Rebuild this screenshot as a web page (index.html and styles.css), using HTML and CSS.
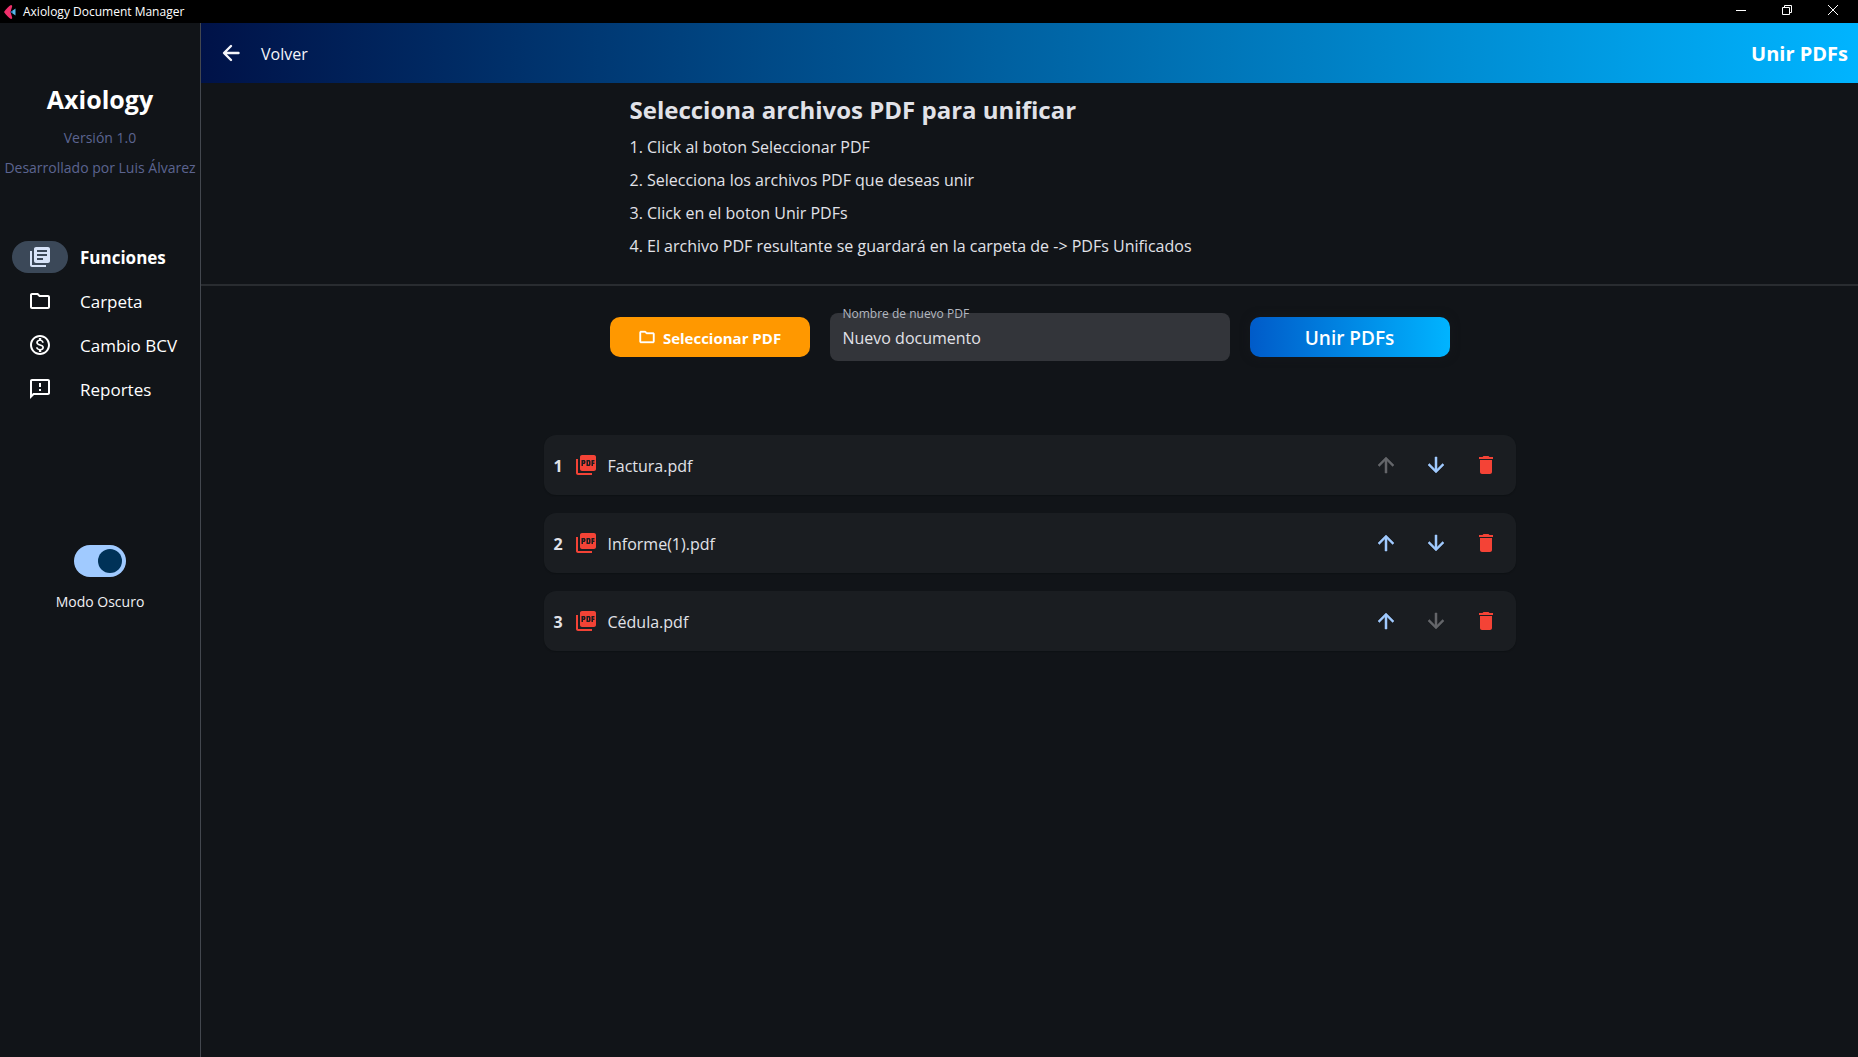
FILE: index.html
```html
<!DOCTYPE html>
<html lang="es">
<head>
<meta charset="utf-8">
<title>Axiology Document Manager</title>
<link rel="stylesheet" href="styles.css">
</head>
<body>
<svg class="sprite" aria-hidden="true">
  <symbol id="books" viewBox="0 0 24 24"><path d="M4 6H2v14c0 1.1.9 2 2 2h14v-2H4V6zm16-4H8c-1.1 0-2 .9-2 2v12c0 1.1.9 2 2 2h12c1.1 0 2-.9 2-2V4c0-1.1-.9-2-2-2zm-1 9H9V9h10v2zm-4 4H9v-2h6v2zm4-8H9V5h10v2z"/></symbol>
  <symbol id="folder" viewBox="0 0 24 24"><path d="M9.17 6l2 2H20v10H4V6h5.17M10 4H4c-1.1 0-1.99.9-1.99 2L2 18c0 1.1.9 2 2 2h16c1.1 0 2-.9 2-2V8c0-1.1-.9-2-2-2h-8l-2-2z"/></symbol>
  <symbol id="money" viewBox="0 0 24 24"><path d="M12 2C6.48 2 2 6.48 2 12s4.48 10 10 10 10-4.48 10-10S17.52 2 12 2zm0 18c-4.41 0-8-3.59-8-8s3.59-8 8-8 8 3.59 8 8-3.59 8-8 8zm.31-8.86c-1.77-.45-2.34-.94-2.34-1.67 0-.84.79-1.43 2.1-1.43 1.38 0 1.9.66 1.94 1.64h1.71c-.05-1.34-.87-2.57-2.49-2.97V5H10.9v1.69c-1.51.32-2.72 1.3-2.72 2.81 0 1.79 1.49 2.69 3.66 3.21 1.95.46 2.34 1.15 2.34 1.87 0 .53-.39 1.39-2.1 1.39-1.6 0-2.23-.72-2.32-1.64H8.04c.1 1.7 1.36 2.66 2.86 2.97V19h2.34v-1.67c1.52-.29 2.72-1.16 2.73-2.77-.01-2.2-1.9-2.96-3.66-3.42z"/></symbol>
  <symbol id="feedback" viewBox="0 0 24 24"><path d="M20 2H4c-1.1 0-1.99.9-1.99 2L2 22l4-4h14c1.1 0 2-.9 2-2V4c0-1.1-.9-2-2-2zm0 14H5.17l-.59.59-.58.58V4h16v12zm-9-4h2v2h-2zm0-6h2v4h-2z"/></symbol>
  <symbol id="back" viewBox="0 0 24 24"><path d="M19.500 12H5.500M12 5L5 12l7 7" fill="none" stroke="currentColor" stroke-width="2.400" stroke-linecap="round" stroke-linejoin="round"/></symbol>
  <symbol id="up" viewBox="0 0 24 24"><path d="M4 12l1.41 1.41L11 7.83V20h2V7.83l5.58 5.59L20 12l-8-8-8 8z"/></symbol>
  <symbol id="down" viewBox="0 0 24 24"><path d="M20 12l-1.41-1.41L13 16.17V4h-2v12.170l-5.580-5.590L4 12l8 8 8-8z"/></symbol>
  <symbol id="trash" viewBox="0 0 24 24"><path d="M6 19c0 1.1.9 2 2 2h8c1.1 0 2-.9 2-2V7H6v12zM19 4h-3.5l-1-1h-5l-1 1H5v2h14V4z"/></symbol>
  <symbol id="pdf" viewBox="0 0 24 24"><path d="M20 2H8c-1.1 0-2 .9-2 2v12c0 1.1.9 2 2 2h12c1.1 0 2-.9 2-2V4c0-1.1-.9-2-2-2zm-8.5 7.5c0 .83-.67 1.5-1.5 1.5H9v2H7.5V7H10c.83 0 1.5.67 1.5 1.5v1zm5 2c0 .83-.67 1.5-1.5 1.5h-2.5V7H15c.83 0 1.5.67 1.5 1.5v3zm4-3H19v1h1.5V11H19v2h-1.5V7h3v1.5zM9 9.5h1v-1H9v1zM4 6H2v14c0 1.1.9 2 2 2h14v-2H4V6zm10 5.5h1v-3h-1v3z"/></symbol>
</svg>

<header class="titlebar">
  <svg class="logo" viewBox="0 0 12 14" aria-hidden="true"><path d="M7 0C8 0 8.500 1 8 2L6.500 7 8 12c.5 1 0 2-1 2C5 13 2 10 0 7 2 4 5 1 7 0z" fill="#f0306c"/><path d="M11.500 3.500v7L6.500 7z" fill="#58b8e8"/><path d="M6.500 7l2-1.400v2.800z" fill="#1c5a9c"/></svg>
  <span class="titlebar-name">Axiology Document Manager</span>
  <div class="window-buttons">
    <button type="button" aria-label="Minimizar"><svg viewBox="0 0 10 10"><path d="M0 5.500h10"/></svg></button>
    <button type="button" aria-label="Restaurar"><svg viewBox="0 0 10 10"><path d="M.5 2.500h7v7h-7zM2.500 2.500v-2h7v7h-2"/></svg></button>
    <button type="button" aria-label="Cerrar"><svg viewBox="0 0 10 10"><path d="M0 0l10 10M10 0L0 10"/></svg></button>
  </div>
</header>

<div class="app">
  <aside class="sidebar">
    <h1 class="brand">Axiology</h1>
    <p class="meta">Versión 1.0</p>
    <p class="meta">Desarrollado por Luis Álvarez</p>
    <nav class="nav">
      <a class="nav-item active" href="#funciones" aria-current="page"><span class="nav-icon"><svg class="icon"><use href="#books"/></svg></span><span class="text">Funciones</span></a>
      <a class="nav-item" href="#carpeta"><span class="nav-icon"><svg class="icon"><use href="#folder"/></svg></span><span class="text">Carpeta</span></a>
      <a class="nav-item" href="#cambio"><span class="nav-icon"><svg class="icon"><use href="#money"/></svg></span><span class="text">Cambio BCV</span></a>
      <a class="nav-item" href="#reportes"><span class="nav-icon"><svg class="icon"><use href="#feedback"/></svg></span><span class="text">Reportes</span></a>
    </nav>
    <div class="theme">
      <input class="switch" type="checkbox" role="switch" id="dark" checked>
      <label for="dark">Modo Oscuro</label>
    </div>
  </aside>

  <main class="main">
    <div class="appbar">
      <button class="back" type="button"><svg class="icon"><use href="#back"/></svg><span class="text">Volver</span></button>
      <h2 class="appbar-title text">Unir PDFs</h2>
    </div>

    <section class="intro">
      <div class="intro-body">
        <h3>Selecciona archivos PDF para unificar</h3>
        <p>1. Click al boton Seleccionar PDF</p>
        <p>2. Selecciona los archivos PDF que deseas unir</p>
        <p>3. Click en el boton Unir PDFs</p>
        <p>4. El archivo PDF resultante se guardará en la carpeta de -&gt; PDFs Unificados</p>
      </div>
    </section>

    <form class="controls">
      <button class="btn pick" type="button"><svg class="icon small"><use href="#folder"/></svg><span class="text">Seleccionar PDF</span></button>
      <div class="field">
        <label for="name">Nombre de nuevo PDF</label>
        <input id="name" type="text" value="Nuevo documento">
      </div>
      <button class="btn merge" type="button"><span class="text">Unir PDFs</span></button>
    </form>

    <ul class="files">
      <li class="file">
        <span class="file-num text">1</span><svg class="icon red"><use href="#pdf"/></svg><span class="file-name text">Factura.pdf</span>
        <button class="tool" type="button" aria-label="Subir" disabled><svg class="icon"><use href="#up"/></svg></button>
        <button class="tool" type="button" aria-label="Bajar"><svg class="icon"><use href="#down"/></svg></button>
        <button class="tool red" type="button" aria-label="Eliminar"><svg class="icon"><use href="#trash"/></svg></button>
      </li>
      <li class="file">
        <span class="file-num text">2</span><svg class="icon red"><use href="#pdf"/></svg><span class="file-name text">Informe(1).pdf</span>
        <button class="tool" type="button" aria-label="Subir"><svg class="icon"><use href="#up"/></svg></button>
        <button class="tool" type="button" aria-label="Bajar"><svg class="icon"><use href="#down"/></svg></button>
        <button class="tool red" type="button" aria-label="Eliminar"><svg class="icon"><use href="#trash"/></svg></button>
      </li>
      <li class="file">
        <span class="file-num text">3</span><svg class="icon red"><use href="#pdf"/></svg><span class="file-name text">Cédula.pdf</span>
        <button class="tool" type="button" aria-label="Subir"><svg class="icon"><use href="#up"/></svg></button>
        <button class="tool" type="button" aria-label="Bajar" disabled><svg class="icon"><use href="#down"/></svg></button>
        <button class="tool red" type="button" aria-label="Eliminar"><svg class="icon"><use href="#trash"/></svg></button>
      </li>
    </ul>
  </main>
</div>
</body>
</html>
```
FILE: styles.css
```css
* { box-sizing: border-box; }

body {
  margin: 0;
  min-height: 100vh;
  display: flex;
  flex-direction: column;
  background: #111418;
  color: #e1e2e8;
  font: 16px/20px "Segoe UI", "Open Sans", "Noto Sans", sans-serif;
}

h1, h2, h3, p, ul { margin: 0; padding: 0; }
button, input { font: inherit; color: inherit; }
button { border: 0; padding: 0; background: none; }

.sprite { display: none; }
.icon { width: 24px; height: 24px; flex: none; fill: currentColor; }
.icon.small { width: 18px; height: 18px; stroke: currentColor; stroke-width: 0.5; }
.red { color: #f44336; }
.text { padding-top: 2px; }

/* Window title bar */
.titlebar {
  display: flex;
  align-items: center;
  gap: 7px;
  height: 23px;
  padding: 0 2px 0 4px;
  background: #000;
  color: #fff;
  font-size: 12px;
}
.logo { width: 12px; height: 14px; }
.window-buttons { display: flex; margin-left: auto; }
.window-buttons button { width: 46px; height: 23px; padding-bottom: 3px; display: grid; place-items: center; }
.window-buttons svg { width: 10px; height: 10px; fill: none; stroke: #fff; }

.app { flex: 1; display: flex; }

/* Sidebar */
.sidebar {
  flex: none;
  width: 201px;
  padding-top: 60px;
  border-right: 1px solid #43474e;
  display: flex;
  flex-direction: column;
  text-align: center;
}
.brand { color: #fff; font-size: 25px; line-height: 32px; margin-bottom: 8px; }
.meta { color: #5c6490; font-size: 14px; line-height: 30px; white-space: nowrap; }
.nav { display: flex; flex-direction: column; gap: 12px; margin-top: 58px; padding-left: 12px; }
.nav-item {
  display: flex;
  align-items: center;
  gap: 12px;
  color: #fff;
  font-size: 17px;
  line-height: 22px;
  text-decoration: none;
}
.nav-icon { width: 56px; height: 32px; border-radius: 16px; display: grid; place-items: center; }
.active { font-weight: 700; }
.active .nav-icon { background: #3b4858; color: #d7e3f8; }
.theme {
  display: flex;
  flex-direction: column;
  align-items: center;
  gap: 15px;
  margin-top: 140px;
  color: #f0f0f4;
  font-size: 14px;
}
.switch {
  appearance: none;
  width: 52px;
  height: 32px;
  margin: 0;
  padding: 4px;
  border-radius: 16px;
  background: #43474e;
  display: flex;
}
.switch::before { content: ""; width: 24px; height: 24px; border-radius: 12px; background: #003258; }
.switch:checked { background: #a0caff; justify-content: flex-end; }

/* Main area */
.main { flex: 1; min-width: 0; }
.appbar {
  display: flex;
  align-items: center;
  justify-content: space-between;
  height: 60px;
  padding: 0 10px 0 18px;
  background: linear-gradient(90deg, #001248, #00b4ff);
}
.back { display: flex; align-items: center; gap: 18px; color: #f4f5fa; }
.appbar-title { color: #fff; font-size: 20px; line-height: 24px; }

.intro { padding: 10px 20px 21px; border-bottom: 2px solid #292c30; }
.intro-body { max-width: 800px; margin: 0 auto; }
.intro h3 { font-size: 24px; line-height: 34px; margin-bottom: 4px; }
.intro p { line-height: 33px; }

.controls {
  display: flex;
  align-items: center;
  justify-content: center;
  gap: 20px;
  padding: 27px 20px 0;
}
.btn {
  width: 200px;
  height: 40px;
  border-radius: 10px;
  display: flex;
  align-items: center;
  justify-content: center;
  gap: 7px;
  color: #fff;
  font-weight: 700;
}
.pick { background: #ff9800; font-size: 15px; }
.merge {
  background: linear-gradient(90deg, #005bc9, #00b4ff);
  font-size: 19px;
  font-weight: 600;
  box-shadow: 0 0 10px #15181c;
}
.field { position: relative; width: 400px; }
.field label {
  position: absolute;
  left: 13px;
  top: -7px;
  color: #b4b8c0;
  font-size: 12px;
  line-height: 16px;
}
.field input {
  display: block;
  width: 100%;
  height: 48px;
  padding: 2px 13px 0;
  border: 0;
  border-radius: 8px;
  background: #33353a;
  outline: 0;
}

.files {
  list-style: none;
  display: flex;
  flex-direction: column;
  gap: 18px;
  max-width: 1012px;
  margin: 0 auto;
  padding: 74px 20px 20px;
}
.file {
  display: flex;
  align-items: center;
  gap: 10px;
  height: 60px;
  padding: 0 10px;
  border-radius: 12px;
  background: #1a1d21;
  box-shadow: 0 1px 1px #0e1114;
}
.file-num { width: 10px; font-weight: 700; }
.file-name { flex: 1; }
.tool { width: 40px; height: 40px; display: grid; place-items: center; color: #a0caff; }
.tool .icon { stroke: currentColor; stroke-width: 0.5; }
.tool.red { color: #f44336; }
.tool.red .icon { stroke: none; }
.tool:disabled { color: #64666a; }
```
